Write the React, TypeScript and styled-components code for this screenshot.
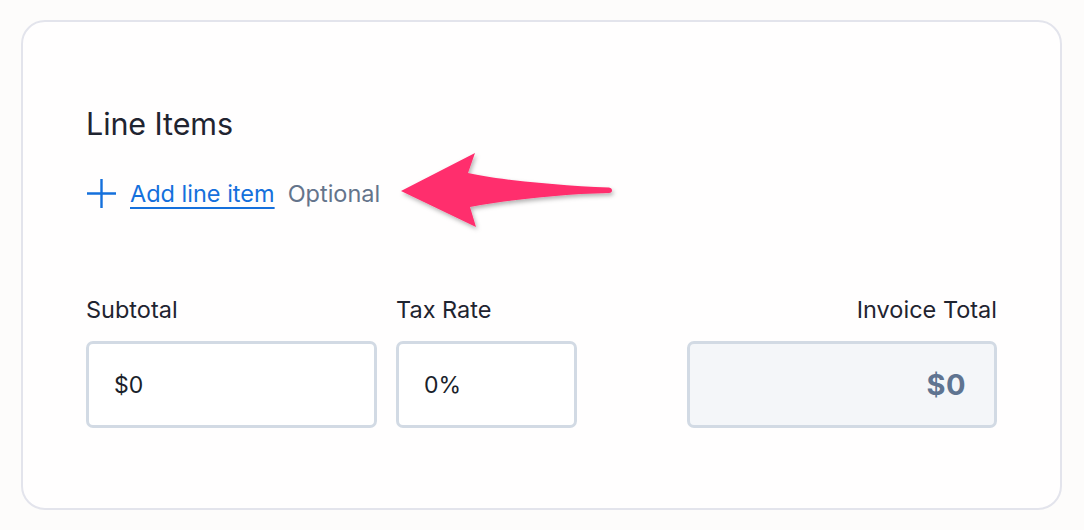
import styled, { createGlobalStyle } from "styled-components";

const GlobalStyle = createGlobalStyle`
  html, body {
    margin: 0;
    padding: 0;
    background: #fdfcfb;
    font-family: "Inter", "Liberation Sans", sans-serif;
    color: #1f2430;
  }
`;

const Page = styled.div`
  padding: 20px 0 0 21px;
`;

const Card = styled.section`
  position: relative;
  box-sizing: border-box;
  width: 1041px;
  height: 490px;
  background: #fffefe;
  border: 2px solid #e3e4ec;
  border-radius: 24px;
  padding: 84px 63px 0 63px;
`;

const Heading = styled.h2`
  margin: 0;
  font-size: 30.5px;
  line-height: 36px;
  font-weight: 400;
  letter-spacing: -0.1px;
`;

const AddRow = styled.div`
  display: flex;
  align-items: center;
  gap: 13px;
  margin-top: 36px;
  font-size: 23.5px;
`;

const AddLink = styled.a`
  color: #1570dc;
  text-decoration: underline;
  text-underline-offset: 5px;
  text-decoration-thickness: 2px;
  cursor: pointer;
`;

const Hint = styled.span`
  color: #64748b;
`;

const Totals = styled.div`
  display: flex;
  align-items: flex-end;
  margin-top: 87px;
`;

const Field = styled.div<{ $width: number; $right?: boolean }>`
  display: flex;
  flex-direction: column;
  width: ${(p) => p.$width}px;
  align-items: ${(p) => (p.$right ? "flex-end" : "flex-start")};
  & + & {
    margin-left: 19px;
  }
`;

const Spacer = styled.div`
  flex: 1;
`;

const Label = styled.label`
  font-size: 23.5px;
  line-height: 28px;
  margin-bottom: 17px;
`;

const Box = styled.div<{ $readonly?: boolean }>`
  box-sizing: border-box;
  width: 100%;
  height: 87px;
  display: flex;
  align-items: center;
  justify-content: ${(p) => (p.$readonly ? "flex-end" : "flex-start")};
  padding: 0 28px 0 25px;
  border: 3px solid #d2dae4;
  border-radius: 7px;
  background: ${(p) => (p.$readonly ? "#f4f6f9" : "#ffffff")};
  font-size: ${(p) => (p.$readonly ? "29px" : "23px")};
  font-weight: ${(p) => (p.$readonly ? 700 : 400)};
  letter-spacing: ${(p) => (p.$readonly ? "0.5px" : "0")};
  color: ${(p) => (p.$readonly ? "#5f7491" : "#1a1f2b")};
`;

const Pointer = styled.svg`
  position: absolute;
  left: 368px;
  top: 113px;
  overflow: visible;
`;

const PlusIcon = () => (
  <svg width="31" height="31" viewBox="0 0 31 31" fill="none">
    <path d="M15.5 1v29M1 15.5h29" stroke="#1570dc" strokeWidth="2.4" />
  </svg>
);

// callout arrow pointing at the add link
const CalloutArrow = () => (
  <Pointer width="260" height="120" viewBox="0 0 260 120">
    <defs>
      <filter id="arrowShadow" x="-20%" y="-30%" width="140%" height="160%">
        <feDropShadow dx="1.5" dy="2.5" stdDeviation="2" floodColor="#000" floodOpacity="0.3" />
      </filter>
    </defs>
    <g transform="translate(-391 -135)" filter="url(#arrowShadow)">
      <path
        d="M401 191 L475 153 L468 173 C500 180 560 186 609 187.5 C613 188 613 193 609 193 C560 194 510 200 470 207 L476 227 Z"
        fill="#ff2d6d"
      />
    </g>
  </Pointer>
);

export default function App() {
  return (
    <>
      <GlobalStyle />
      <Page>
        <Card>
          <Heading>Line Items</Heading>
          <AddRow>
            <PlusIcon />
            <AddLink>Add line item</AddLink>
            <Hint>Optional</Hint>
          </AddRow>
          <Totals>
            <Field $width={291}>
              <Label>Subtotal</Label>
              <Box>$0</Box>
            </Field>
            <Field $width={181}>
              <Label>Tax Rate</Label>
              <Box>0%</Box>
            </Field>
            <Spacer />
            <Field $width={310} $right>
              <Label>Invoice Total</Label>
              <Box $readonly>$0</Box>
            </Field>
          </Totals>
          <CalloutArrow />
        </Card>
      </Page>
    </>
  );
}
